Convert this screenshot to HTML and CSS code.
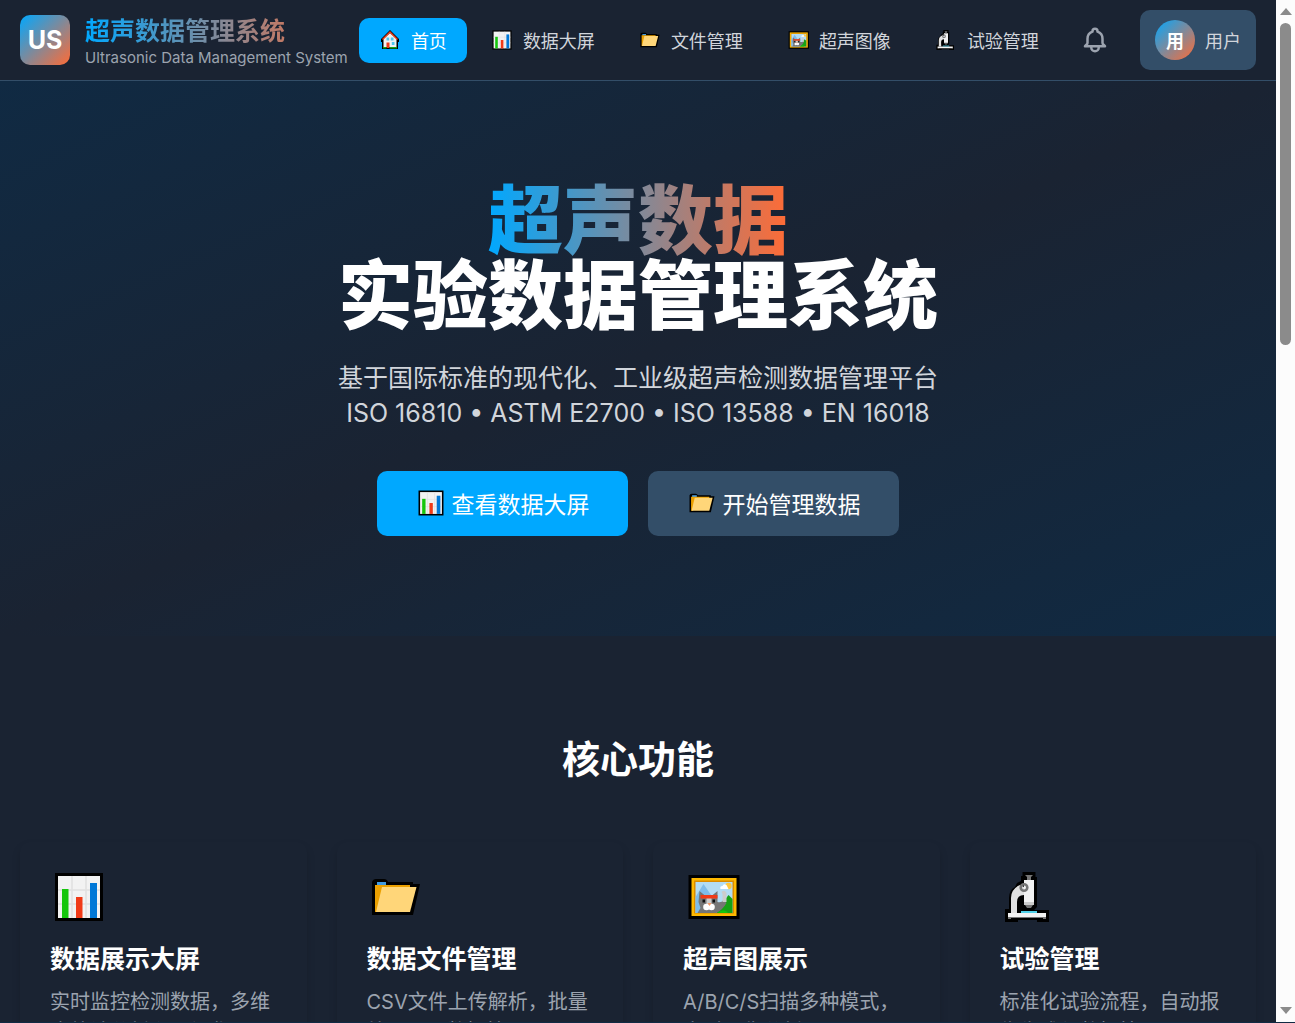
FILE: index.html
```html
<!DOCTYPE html>
<html lang="zh-CN">
<head>
<meta charset="utf-8">
<meta name="viewport" content="width=device-width, initial-scale=1">
<title>超声数据管理系统</title>
<link rel="stylesheet" href="styles.css">
</head>
<body>
<svg class="sprite" aria-hidden="true">
  <symbol id="i-home" viewBox="0 0 18 20">
    <path fill="#000" d="M9 0 0 9v3h1v7h16v-7h1V9z"/>
    <path fill="#f2f2f2" d="M9 3 2.500 9v8h13V9z"/>
    <path fill="none" stroke="#f03a17" stroke-width="1.400" d="M1.500 9.500 9 2l7.500 7.500"/>
    <path fill="#50c8ee" d="M5.500 7.500h2.700v3H5.500zm4.300 0h2.700v3H9.800zm1 4.500h2.700v3h-2.700z"/>
    <path fill="#f03a17" d="M5.500 12.500h3V18h-3z"/>
    <path fill="#16a216" d="M2 17h3.500v1.500H2zm6.500 0H16v1.500H8.500z"/>
  </symbol>
  <symbol id="i-chart" viewBox="-1 -1 50 50">
    <path fill="#000" d="M0 0h48v48H0z"/>
    <path fill="#f2f2f2" d="M3 3h42v42H3z"/>
    <path fill="none" stroke="#e0e0e0" stroke-width="1.500" d="M17 3v42M31 3v42M3 17h42M3 31h42"/>
    <path fill="#16c60c" d="M7 16h6.500v29H7z"/>
    <path fill="#f03a17" d="M21 24h6.500v21H21z"/>
    <path fill="#0078d7" d="M35 10h7v35h-7z"/>
  </symbol>
  <symbol id="i-folder" viewBox="-1 -1 50 50">
    <path fill="#000" d="M0 9q1-3 4-3h8q3 0 4 3h25v2h7l-7 31H0z"/>
    <path fill="#409ae1" d="M5 9h9v4H5z"/>
    <path fill="#eba000" d="M3 12h35v4L6 39H3z"/>
    <path fill="#ffd679" d="M10 14h34.500L38 39H4z"/>
  </symbol>
  <symbol id="i-picture" viewBox="-3 -3 53 50">
    <path fill="#000" d="M0 0h51v44H0z"/>
    <path fill="#ffb900" d="M3 3h45v38H3z"/>
    <path fill="#da8b00" d="M5.500 5.500h40v33h-40z"/>
    <path fill="#b3dcf4" d="M7 7h37v31H7z"/>
    <path fill="#7fbcea" d="M7 22l8-13 11 16v13H7z"/>
    <circle cx="40" cy="11" r="3.200" fill="#ffc83d"/>
    <path fill="#fff" d="M32 14q-1-3 2-3 1-3 4-1l2 4z"/>
    <path fill="#16a216" d="M28 38l9-14 3-4 4 4v14z"/>
    <path fill="#767676" d="M9 38l3-5-2-6 1-11 6 5h6l6-5v11q4 1 6-2l3 3q-4 7-10 10z"/>
    <path fill="#16c60c" d="M29 38q5-5 10-1v1z"/>
    <path fill="#ccc" d="M33 17q3-3 5 1v9h-4v-8zM18 23h5v6h-5z"/>
    <path fill="#f03a17" d="M12 20h17v3.500H12z"/>
    <path fill="#111" d="M14 24.500h2.500v3H14zm10 0h2.500v3H24z"/>
    <circle cx="18" cy="32" r="3.300" fill="#fff"/><circle cx="23" cy="32" r="3.300" fill="#fff"/>
    <path fill="#f79663" d="M19 28h4l-2 3z"/>
  </symbol>
  <symbol id="i-scope" viewBox="0 0 48 50">
    <path fill="#000" d="M17.500 0h13v5H32v30l-3 3h15v12H32v-2H13v2H0V37h4V26q0-8 6-11l2-4 4-2v-5h1.500z"/>
    <path fill="#f2f2f2" d="M19 8h10v22H19zM3 41h38v4H3z"/>
    <path fill="#e0e0e0" d="M6 41V26q0-9 9-13l4 2v8q-7 0-7 7v11z"/>
    <path fill="#ccc" d="M19 30h10v3H19z"/>
    <path fill="#767676" d="M20 33h8l-2 3h-4zM20 3h8l-2 2v3h-4V5zM3 45h38v2h-3v-1H6v1H3z"/>
    <circle cx="19" cy="15.500" r="3.300" fill="none" stroke="#767676" stroke-width="2.600"/>
    <path fill="#50d0e8" d="M16 39h16v2H16z"/>
    <path fill="#000" d="M13 31q0-5 4-6v12h-4z"/>
  </symbol>
</svg>
<div class="window">
  <div class="page">
    <header class="topbar">
      <a class="brand" href="#">
        <span class="brand-mark">US</span>
        <span class="brand-text">
          <span class="brand-name">超声数据管理系统</span>
          <span class="brand-sub">Ultrasonic Data Management System</span>
        </span>
      </a>
      <nav class="menu">
        <a class="menu-item active" href="#"><svg class="emoji"><use href="#i-home"/></svg>首页</a>
        <a class="menu-item" href="#"><svg class="emoji"><use href="#i-chart"/></svg>数据大屏</a>
        <a class="menu-item" href="#"><svg class="emoji"><use href="#i-folder"/></svg>文件管理</a>
        <a class="menu-item" href="#"><svg class="emoji"><use href="#i-picture"/></svg>超声图像</a>
        <a class="menu-item" href="#"><svg class="emoji"><use href="#i-scope"/></svg>试验管理</a>
      </nav>
      <div class="account">
        <button class="bell" type="button" aria-label="通知">
          <svg viewBox="0 0 24 24"><path d="M15 17h5l-1.405-1.405A2.032 2.032 0 0 1 18 14.158V11a6.002 6.002 0 0 0-4-5.659V5a2 2 0 1 0-4 0v.341C7.670 6.165 6 8.388 6 11v3.159c0 .538-.214 1.055-.595 1.436L4 17h5m6 0v1a3 3 0 1 1-6 0v-1m6 0H9"/></svg>
        </button>
        <button class="user" type="button"><span class="avatar">用</span>用户</button>
      </div>
    </header>
    <main>
      <section class="hero">
        <h1><span class="hero-accent">超声数据</span><span>实验数据管理系统</span></h1>
        <p>基于国际标准的现代化、工业级超声检测数据管理平台<br>ISO 16810 • ASTM E2700 • ISO 13588 • EN 16018</p>
        <div class="actions">
          <button class="btn btn-primary" type="button"><svg class="emoji"><use href="#i-chart"/></svg>查看数据大屏</button>
          <button class="btn" type="button"><svg class="emoji"><use href="#i-folder"/></svg>开始管理数据</button>
        </div>
      </section>
      <section class="features">
        <h2>核心功能</h2>
        <div class="cards">
          <article class="card">
            <svg class="card-icon"><use href="#i-chart"/></svg>
            <h3>数据展示大屏</h3>
            <p>实时监控检测数据，多维度统计分析和可视化</p>
          </article>
          <article class="card">
            <svg class="card-icon"><use href="#i-folder"/></svg>
            <h3>数据文件管理</h3>
            <p>CSV文件上传解析，批量处理，元数据管理</p>
          </article>
          <article class="card">
            <svg class="card-icon"><use href="#i-picture"/></svg>
            <h3>超声图展示</h3>
            <p>A/B/C/S扫描多种模式，实时图像分析</p>
          </article>
          <article class="card">
            <svg class="card-icon"><use href="#i-scope"/></svg>
            <h3>试验管理</h3>
            <p>标准化试验流程，自动报告生成与数据管理</p>
          </article>
        </div>
      </section>
    </main>
  </div>
  <div class="scrollbar" aria-hidden="true">
    <span class="arrow arrow-up"></span>
    <span class="track"><span class="thumb"></span></span>
    <span class="arrow arrow-down"></span>
  </div>
</div>
</body>
</html>
```
FILE: styles.css
```css
:root {
  --bg: #1a2332;
  --blue: #00a8ff;
  --orange: #ff6b35;
  --steel: #334e68;
  --deep: #102a43;
}

* { box-sizing: border-box; }

body {
  margin: 0;
  background: var(--bg);
  color: #fff;
  font-family: Inter, "Noto Sans CJK SC", sans-serif;
  font-size: 20px;
}

a { color: inherit; text-decoration: none; }
button { border: 0; font: inherit; color: inherit; cursor: pointer; }
h1, h2, h3, p { margin: 0; }
symbol { overflow: visible; }

.sprite { position: absolute; width: 0; height: 0; }

.window {
  display: grid;
  grid-template-columns: minmax(0, 1fr) 19px;
  height: 100vh;
  overflow: hidden;
  border-bottom: 1px solid var(--deep);
}

.page { overflow: hidden; }

.topbar {
  display: flex;
  align-items: center;
  justify-content: space-between;
  height: 81px;
  padding: 0 20px;
  border-bottom: 1px solid var(--steel);
}

.brand { display: flex; align-items: center; gap: 15px; }

.brand-mark {
  display: grid;
  place-items: center;
  width: 50px;
  height: 50px;
  border-radius: 10px;
  background: linear-gradient(135deg, var(--blue), var(--orange));
  font-size: 25px;
  font-weight: 700;
}

.brand-text { display: flex; flex-direction: column; padding-top: 2px; white-space: nowrap; }

.brand-name {
  font-size: 25px;
  line-height: 34px;
  font-weight: 700;
  background: linear-gradient(90deg, var(--blue), var(--orange));
  background-clip: text;
  -webkit-background-clip: text;
  color: transparent;
}

.brand-sub { font-size: 15px; line-height: 20px; color: #9ca3af; }

.menu { display: flex; gap: 4px; }

.menu-item {
  display: flex;
  align-items: center;
  gap: 10px;
  height: 45px;
  padding: 0 20px;
  border-radius: 10px;
  font-size: 18px;
  color: #d1d5db;
  white-space: nowrap;
}

.menu-item.active { background: var(--blue); color: #fff; }

.menu-item .emoji { width: 22px; height: 20px; }

.account { display: flex; align-items: center; gap: 20px; }

.bell { display: grid; padding: 10px; background: none; color: #9ca3af; }

.bell svg {
  width: 30px;
  height: 30px;
  fill: none;
  stroke: currentColor;
  stroke-width: 2;
  stroke-linecap: round;
  stroke-linejoin: round;
}

.user {
  display: flex;
  align-items: center;
  gap: 10px;
  height: 60px;
  padding: 0 15px;
  border-radius: 10px;
  background: var(--steel);
  color: #d1d5db;
  font-size: 18px;
}

.avatar {
  display: grid;
  place-items: center;
  width: 40px;
  height: 40px;
  border-radius: 50%;
  background: linear-gradient(135deg, var(--blue), var(--orange));
  color: #fff;
  font-weight: 700;
}

.hero {
  padding: 102px 20px 100px;
  background: linear-gradient(to bottom right, var(--deep), var(--bg), var(--deep));
  text-align: center;
}

.hero h1 { font-size: 75px; line-height: 75px; font-weight: 900; }
.hero h1 span { display: block; }

.hero h1 .hero-accent {
  width: fit-content;
  margin: 0 auto;
  background: linear-gradient(90deg, var(--blue), var(--orange));
  background-clip: text;
  -webkit-background-clip: text;
  color: transparent;
}

.hero p { margin-top: 28px; font-size: 25px; line-height: 35px; color: #d1d5db; }

.actions { display: flex; justify-content: center; gap: 20px; margin-top: 40px; }

.btn {
  display: flex;
  align-items: center;
  justify-content: center;
  gap: 8px;
  width: 251px;
  height: 65px;
  padding: 0 0 2px 2px;
  border-radius: 10px;
  background: var(--steel);
  font-size: 23px;
}

.btn-primary { background: var(--blue); }
.btn .emoji { width: 26px; height: 26px; }

.features { padding: 101px 20px 100px; }

.features h2 { font-size: 38px; line-height: 45px; font-weight: 700; text-align: center; }

.cards {
  display: grid;
  grid-template-columns: repeat(4, minmax(0, 1fr));
  gap: 30px;
  margin-top: 60px;
}

.card {
  padding: 30px;
  border-radius: 10px;
  box-shadow: 0 5px 8px rgba(0, 0, 0, 0.15);
}

.card-icon { display: block; width: 58px; height: 50px; }
.card h3 { margin-top: 20px; font-size: 25px; line-height: 35px; font-weight: 700; }
.card p { margin-top: 10px; font-size: 20px; line-height: 30px; color: #9ca3af; }

.scrollbar {
  display: flex;
  flex-direction: column;
  align-items: center;
  justify-content: space-between;
  padding: 8px 0;
  background: #fcfcfc;
}

.arrow { border: 6px solid transparent; }
.arrow-up { border-top: 0; border-bottom: 7px solid #8b8b8b; }
.arrow-down { border-bottom: 0; border-top: 7px solid #8b8b8b; }

.track { flex: 1; padding: 8px 0; }

.thumb { display: block; width: 11px; height: 33%; border-radius: 6px; background: #8b8b8b; }
```
